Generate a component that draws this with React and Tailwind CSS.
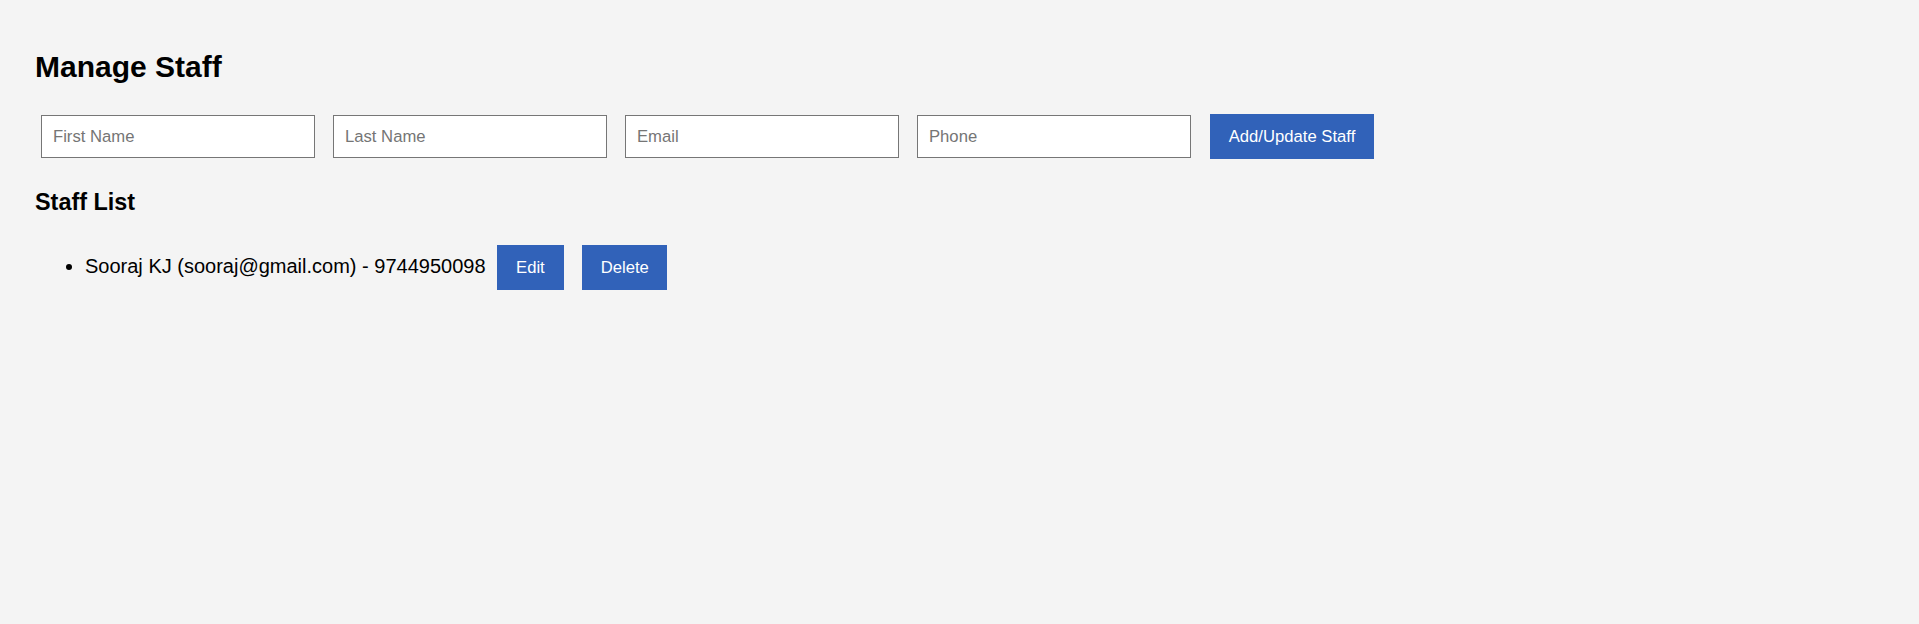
import React, { useState } from 'react';

export default function App() {
  const [form, setForm] = useState({ firstName: '', lastName: '', email: '', phone: '' });
  const [staff] = useState([
    { id: 1, firstName: 'Sooraj', lastName: 'KJ', email: 'sooraj@gmail.com', phone: '9744950098' }
  ]);

  const fields = [
    { key: 'firstName', label: 'First Name' },
    { key: 'lastName', label: 'Last Name' },
    { key: 'email', label: 'Email' },
    { key: 'phone', label: 'Phone' }
  ];

  return (
    <div
      className="min-h-screen bg-[#f4f4f4] pl-[35px] pt-[49px] text-black"
      style={{ fontFamily: '"Liberation Sans", Arial, sans-serif' }}
    >
      <h2 className="text-[30px] font-bold leading-[35px]">Manage Staff</h2>

      <div className="mt-[30px] flex h-[45px] items-center">
        {fields.map((f, i) => (
          <input
            key={f.key}
            type="text"
            placeholder={f.label}
            value={form[f.key]}
            onChange={(e) => setForm({ ...form, [f.key]: e.target.value })}
            className={`h-[43px] w-[274px] border border-[#767676] bg-white px-[11px] text-[16.67px] text-black outline-none placeholder:text-[#757575] ${
              i === 0 ? 'ml-[6px]' : 'ml-[18px]'
            }`}
          />
        ))}
        <button className="ml-[19px] h-[45px] w-[164px] bg-[#3162b9] text-[16.67px] text-white">
          Add/Update Staff
        </button>
      </div>

      <h3 className="mt-[30px] text-[23.4px] font-bold leading-[27px]">Staff List</h3>

      <ul className="mt-[29px] list-disc pl-[50px] text-[20px]">
        {staff.map((s) => (
          <li key={s.id}>
            {s.firstName} {s.lastName} ({s.email}) - {s.phone}
            <button className="ml-[11px] inline-block h-[45px] bg-[#3162b9] px-[19.5px] text-[16.67px] text-white">
              Edit
            </button>
            <button className="ml-[18px] inline-block h-[45px] bg-[#3162b9] px-[18.5px] text-[16.67px] text-white">
              Delete
            </button>
          </li>
        ))}
      </ul>
    </div>
  );
}
